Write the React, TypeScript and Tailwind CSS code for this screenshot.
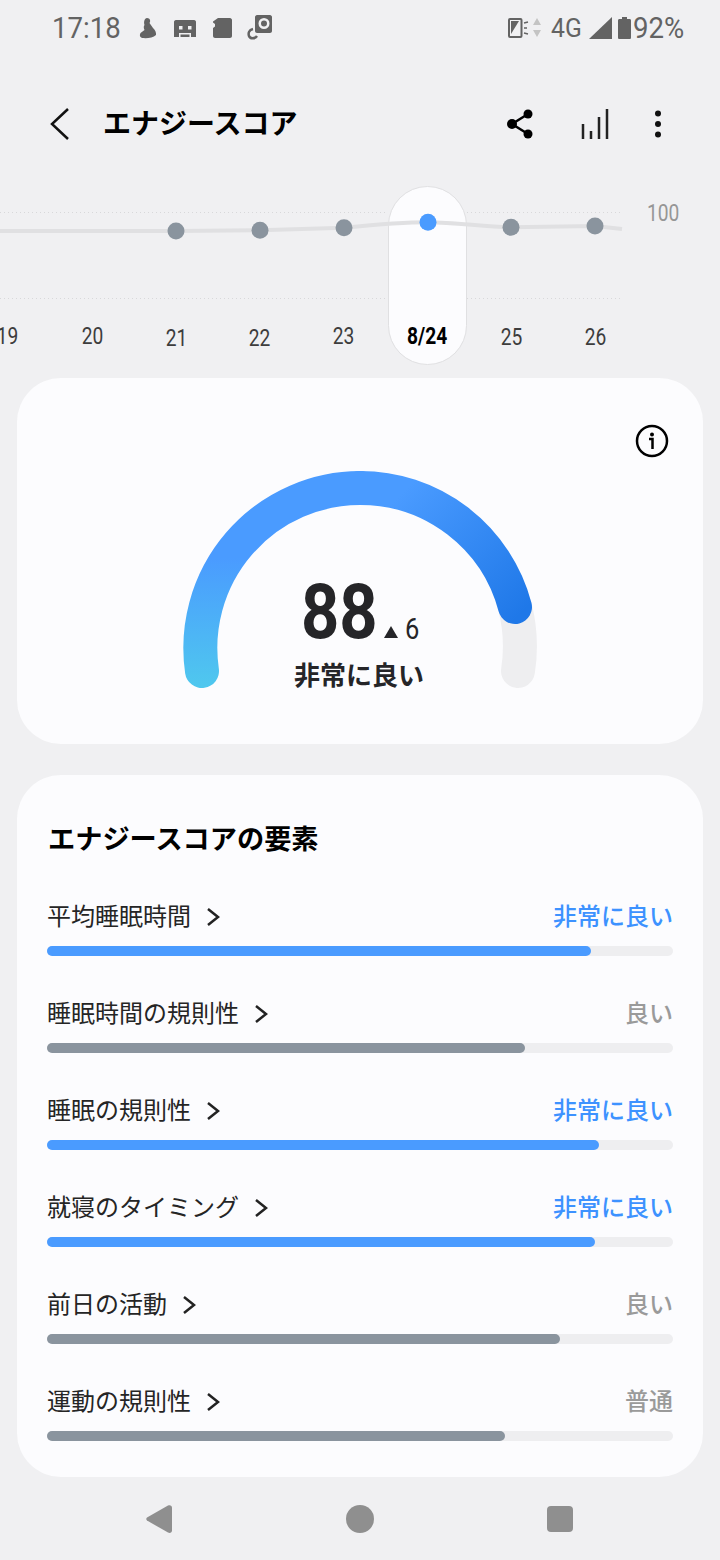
const JP = "font-['Roboto','Noto_Sans_CJK_JP',sans-serif]";

function StatusBar() {
  return (
    <div className="h-[56px] flex items-center justify-between pl-[52px] pr-[35px] text-[#636363]">
      <div className="flex items-center">
        <span className="text-[30px] leading-none w-[68px] inline-block origin-left scale-x-[0.92] whitespace-nowrap">17:18</span>
        <svg width="150" height="40" viewBox="0 0 150 40" className="ml-[10px]" fill="#636363">
          <path d="M17 10c3 0 4 3 2.500 5L23 20c2 2 3.500 4.500 3 7-3 3-9 3.500-14 3-2.500-1-2.500-3-1.500-5l4-3c-1-2-1-4 0-5-1-3 0-7 2.500-7z" />
          <path fillRule="evenodd" d="M46 12h18c1.500 0 2 1 2 2v15H44V14c0-1 .6-2 2-2zm3 6v3.500h3.500V18zm9 0v3.500h3.500V18zM49 25v4h1.500v-2.500h9V29H61v-4z" />
          <path d="M88 10h12c1 0 2 1 2 2v16c0 1-1 2-2 2H85c-1 0-2-1-2-2v-8l2-1.500v-2.500l-2-1.500v-1z" />
          <path fillRule="evenodd" d="M127 7h13c1 0 2 1 2 2v14c0 1-1 2-2 2h-13c-1 0-2-1-2-2V9c0-1 1-2 2-2zm7 3a5.500 5.500 0 100 11 5.500 5.500 0 000-11zm0 2.500a3 3 0 110 6 3 3 0 010-6z" />
          <path d="M123 21c-4 1-5 4-4 7 1 3 6 3 8 0" fill="none" stroke="#636363" strokeWidth="2.500" />
        </svg>
      </div>
      <div className="flex items-center">
        <svg width="34" height="24" viewBox="0 0 34 24">
          <rect x="1" y="3" width="12.500" height="18" rx="1" fill="none" stroke="#636363" strokeWidth="2" />
          <path d="M3 5h8L3 18z" fill="#636363" />
          <path d="M16 7l4-1M16 12h3M16 17l4 1" stroke="#636363" strokeWidth="1.500" />
          <path d="M29 2l4 7h-8zM29 21l4-7h-8z" fill="#c4c4c4" />
        </svg>
        <span className="ml-[9px] text-[26px] leading-none w-[31px] inline-block origin-left scale-x-[0.95]">4G</span>
        <svg width="23" height="22" viewBox="0 0 23 22" className="ml-[7px]"><path d="M0 22 23 0v22z" fill="#636363" /></svg>
        <svg width="13" height="22" viewBox="0 0 13 22" className="ml-[6px]"><path d="M4 0h5v2h2.500c1 0 1.500 .6 1.500 1.500v17c0 1-.6 1.500-1.500 1.500h-10C.6 22 0 21.500 0 20.500v-17C0 2.600 .6 2 1.500 2H4z" fill="#636363" /></svg>
        <span className="text-[30px] leading-none w-[52px] inline-block origin-left scale-x-[0.92] whitespace-nowrap ml-[2px]">92%</span>
      </div>
    </div>
  );
}

function Header() {
  return (
    <div className="h-[130px] flex items-center pt-[6px] pl-[48px] pr-[58px]">
      <div className="flex items-center w-full">
        <svg width="24" height="34" viewBox="0 0 24 34" fill="none" stroke="#111" strokeWidth="2.500"><path d="M20 2 4 17l16 15" /></svg>
        <span className="ml-[31px] mt-[2px] text-[28px] leading-none font-bold text-black">エナジースコア</span>
        <div className="ml-auto flex items-center">
          <svg width="26" height="30" viewBox="0 0 26 30" fill="#000">
            <circle cx="21" cy="5" r="4.500" /><circle cx="5" cy="15" r="5" /><circle cx="21" cy="25" r="4.500" />
            <path d="M21 5 5 15l16 10" fill="none" stroke="#000" strokeWidth="2.500" />
          </svg>
          <svg width="28" height="30" viewBox="0 0 28 30" stroke="#222" strokeWidth="2.500" className="ml-[48px]"><path d="M2 30V15M10 30V22M18 30V8M26 30V0" /></svg>
          <svg width="8" height="28" viewBox="0 0 8 28" fill="#111" className="ml-[45px]"><circle cx="4" cy="3.500" r="3" /><circle cx="4" cy="14" r="3" /><circle cx="4" cy="24.500" r="3" /></svg>
        </div>
      </div>
    </div>
  );
}

const days = [
  { t: "19", c: "text-[#3d3d3d] translate-y-0" },
  { t: "20", c: "text-[#3d3d3d] translate-y-0 translate-x-px" },
  { t: "21", c: "text-[#3d3d3d] translate-y-[2px] translate-x-px" },
  { t: "22", c: "text-[#3d3d3d] translate-y-[2px]" },
  { t: "23", c: "text-[#3d3d3d] translate-y-0" },
  { t: "8/24", c: "text-black font-bold translate-y-0" },
  { t: "25", c: "text-[#3d3d3d] translate-y-px" },
  { t: "26", c: "text-[#3d3d3d] translate-y-px" },
];

function Chart() {
  return (
    <div className="relative h-[179px] overflow-hidden">
      <div className="absolute left-[388px] top-0 w-[79px] h-[179px] rounded-[40px] bg-[#fcfcfe] border border-[#e0e0e2]" />
      <svg className="absolute left-0 top-0" width="720" height="179" viewBox="0 0 720 179">
        <path d="M0 26.500H388M467 26.500H620M0 112.500H388M467 112.500H620" stroke="#d8d8da" strokeWidth="1" strokeDasharray="1 3" fill="none" />
        <path d="M0 45H176L260 44.300 344 41.700C372 39 400 36.300 428 36.300 456 36.300 484 41 511 41.300L595 40 622 43" stroke="#e0e0e2" strokeWidth="4" fill="none" />
        {[[176, 45], [260, 44.3], [344, 41.7], [511, 41.3], [595, 40]].map(([x, y]) => (
          <circle key={x} cx={x} cy={y} r="8.500" fill="#8a949e" />
        ))}
        <circle cx="428" cy="36.300" r="8.500" fill="#4a9bff" />
      </svg>
      <div className="absolute left-[647px] top-[15px] text-[#969696] text-[24px] leading-none inline-block origin-left scale-x-[0.8]">100</div>
      <div className="absolute left-[-35px] top-[138px] flex">
        {days.map((d) => (
          <div key={d.t} className={"w-[84px] text-center text-[24px] leading-[24px] " + d.c}>
            <span className="inline-block scale-x-[0.8]">{d.t}</span>
          </div>
        ))}
      </div>
    </div>
  );
}

function Gauge() {
  return (
    <div className="relative mt-[13px] mx-[17px] h-[366px] rounded-[44px] bg-[#fcfcfe]">
      <svg className="absolute right-[34px] top-[46px]" width="34" height="34" viewBox="0 0 34 34" fill="none">
        <circle cx="17" cy="17" r="15" stroke="#000" strokeWidth="2.500" />
        <circle cx="17" cy="10.500" r="2" fill="#000" />
        <path d="M14 15h3.500v10" stroke="#000" strokeWidth="2.500" />
      </svg>
      <svg className="absolute left-[140px] top-[70px]" width="400" height="260" viewBox="0 0 400 260" fill="none">
        <defs>
          <linearGradient id="gl" gradientUnits="userSpaceOnUse" x1="0" y1="240" x2="0" y2="110">
            <stop offset="0" stopColor="#4fc8ee" />
            <stop offset="1" stopColor="#4a9bff" />
          </linearGradient>
          <linearGradient id="gr" gradientUnits="userSpaceOnUse" x1="230" y1="60" x2="350" y2="180">
            <stop offset="0" stopColor="#4a9bff" />
            <stop offset="1" stopColor="#1f78e8" />
          </linearGradient>
        </defs>
        <path d="M358 159A160 160 0 0 1 361 223" stroke="#eeeef0" strokeWidth="34" strokeLinecap="round" />
        <path d="M203 40A160 160 0 0 1 358 159" stroke="url(#gr)" strokeWidth="34" strokeLinecap="round" />
        <path d="M45 223A160 160 0 0 1 203 40" stroke="url(#gl)" strokeWidth="34" strokeLinecap="round" />
      </svg>
      <div className="absolute left-[284px] top-[194px] flex items-end text-[#252528]">
        <span className="font-bold text-[76px] leading-[80px] w-[75px] inline-block origin-left scale-x-[0.88]">88</span>
        <span className="ml-[8px] mb-[14px] w-0 h-0 border-l-[7px] border-r-[7px] border-b-[12px] border-l-transparent border-r-transparent border-b-[#252528]" />
        <span className="ml-[7px] mb-[9px] text-[30px] leading-[28px] inline-block origin-left scale-x-[0.85]">6</span>
      </div>
      <div className="absolute left-[277px] top-[280px] text-[26px] leading-[36px] font-bold text-[#252528] whitespace-nowrap">非常に良い</div>
    </div>
  );
}

const rows = [
  { label: "平均睡眠時間", status: "非常に良い", w: 544, blue: true },
  { label: "睡眠時間の規則性", status: "良い", w: 478, blue: false },
  { label: "睡眠の規則性", status: "非常に良い", w: 552, blue: true },
  { label: "就寝のタイミング", status: "非常に良い", w: 548, blue: true },
  { label: "前日の活動", status: "良い", w: 513, blue: false },
  { label: "運動の規則性", status: "普通", w: 458, blue: false },
];

function Row({ label, status, w, blue }: { label: string; status: string; w: number; blue: boolean }) {
  return (
    <div className="h-[97px] pt-[1px]">
      <div className="flex items-center h-[36px]">
        <span className="text-[24px] leading-[36px] text-[#252525]">{label}</span>
        <svg width="14" height="20" viewBox="0 0 14 20" fill="none" stroke="#222" strokeWidth="2.500" className="ml-[15px]"><path d="M2 2l10 8-10 8" /></svg>
        <span className={"ml-auto text-[24px] leading-[36px] font-medium " + (blue ? "text-[#3d92ff]" : "text-[#9a9a9a]")}>{status}</span>
      </div>
      <div className="mt-[11px] h-[10px] rounded-full bg-[#eeeef0]">
        <div className={"h-full rounded-full " + (blue ? "bg-[#4a9bff]" : "bg-[#8a949e]")} style={{ width: w }} />
      </div>
    </div>
  );
}

function Factors() {
  return (
    <div className="mt-[31px] mx-[17px] h-[702px] rounded-[44px] bg-[#fcfcfe] pl-[30px] pr-[30px] pt-[45px]">
      <h2 className="text-[27.2px] leading-[40px] font-bold text-black pl-px">エナジースコアの要素</h2>
      <div className="mt-[38px]">
        {rows.map((r) => <Row key={r.label} {...r} />)}
      </div>
    </div>
  );
}

function NavBar() {
  return (
    <div className="h-[83px] flex items-start pt-[28px]">
      <svg width="26" height="28" viewBox="0 0 26 28" className="ml-[146px]" fill="#8f8f8f"><path d="M1 12.500 22 .6c2-1 4 0 4 2v23c0 2-2 3-4 2L1 15.500c-1-.6-1-2.400 0-3z" /></svg>
      <div className="w-[28px] h-[28px] rounded-full bg-[#8f8f8f] ml-[174px]" />
      <div className="w-[26px] h-[26px] rounded-[4px] bg-[#8f8f8f] ml-[173px] mt-px" />
    </div>
  );
}

export default function App() {
  return (
    <div className={"w-[720px] h-[1560px] overflow-hidden bg-[#f0f0f2] " + JP}>
      <StatusBar />
      <Header />
      <Chart />
      <Gauge />
      <Factors />
      <NavBar />
    </div>
  );
}
